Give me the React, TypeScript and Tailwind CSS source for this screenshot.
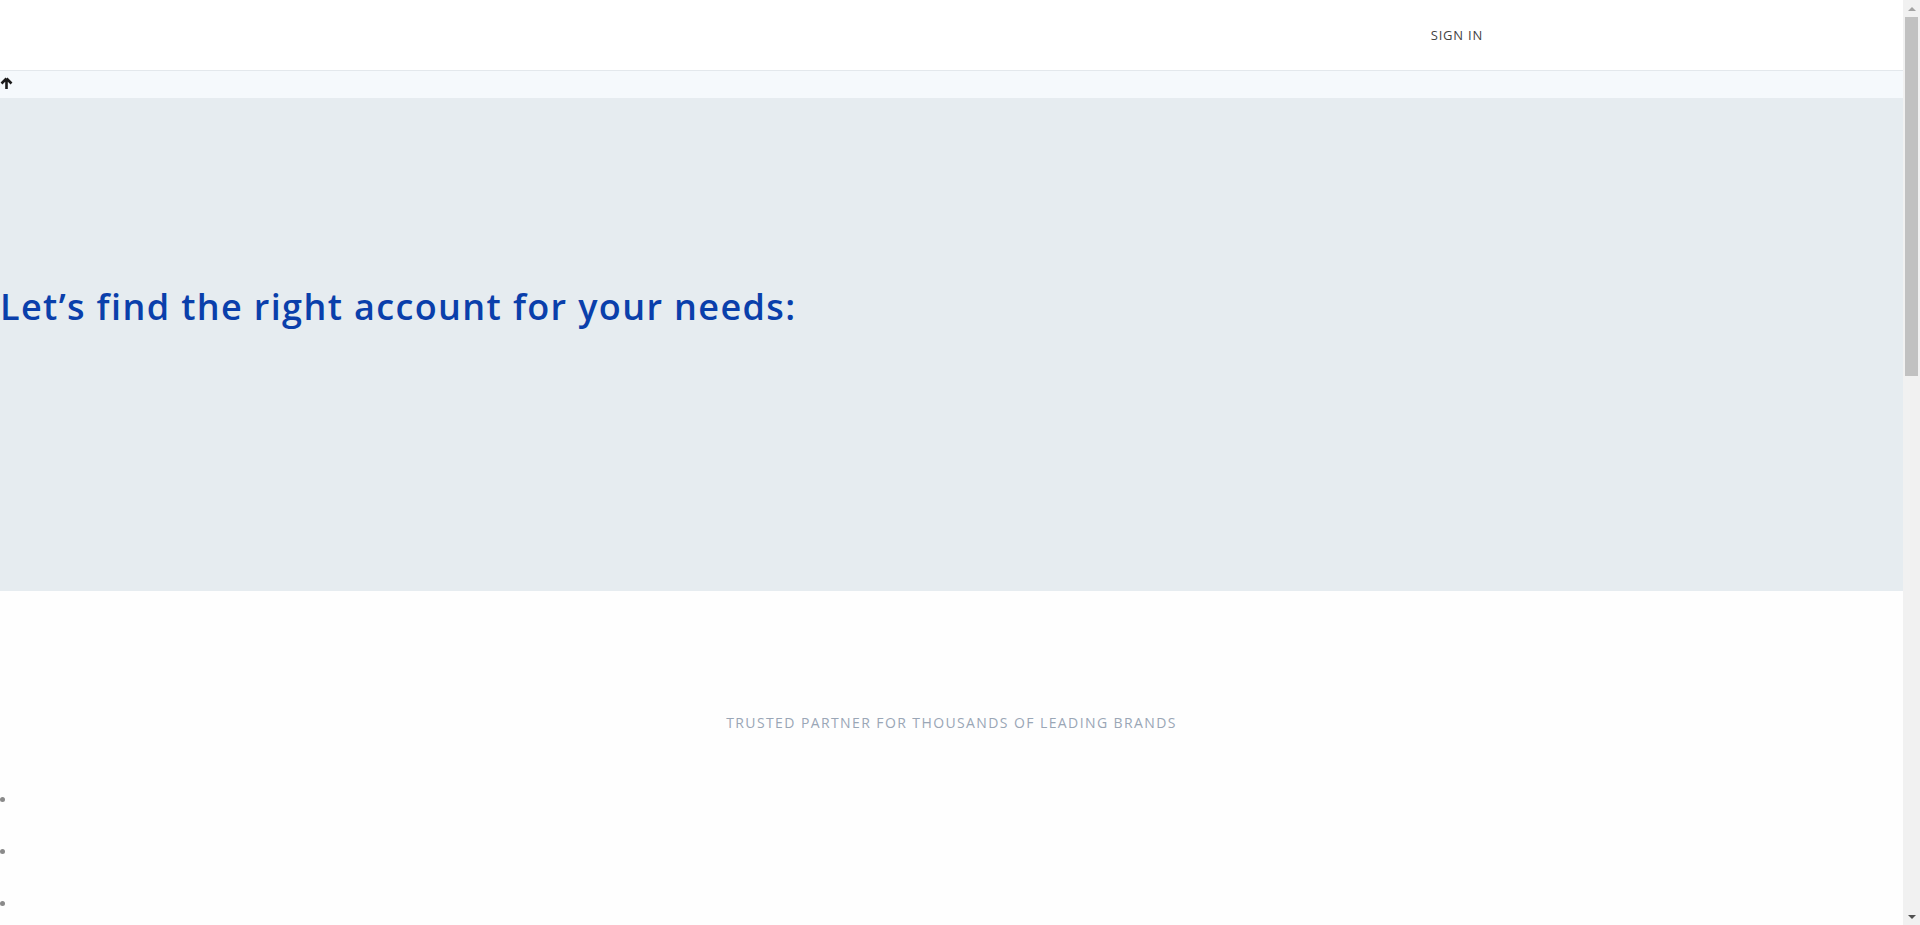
const logos = ["a", "b", "c"]

function UpArrow() {
  return (
    <svg width="13" height="13" viewBox="0 0 13 13" className="mt-[-3px]">
      <path d="M6.5 1.5 L1.5 6.5 M6.5 1.5 L11.5 6.5 M6.5 1.5 V12" stroke="#1a1a1a" strokeWidth="2.6" fill="none" />
    </svg>
  )
}

function Scrollbar() {
  return (
    <div className="w-[17px] shrink-0 h-full bg-[#f1f1f1] flex flex-col items-center">
      <div className="h-[17px] flex items-center justify-center">
        <span className="w-0 h-0 border-x-[4px] border-x-transparent border-b-[4px] border-b-[#a3a3a3]" />
      </div>
      <div className="w-[13px] h-[359px] bg-[#c1c1c1]" />
      <div className="flex-1" />
      <div className="h-[17px] flex items-center justify-center">
        <span className="w-0 h-0 border-x-[4px] border-x-transparent border-t-[4px] border-t-[#505050]" />
      </div>
    </div>
  )
}

export default function App() {
  return (
    <div className="h-screen flex overflow-hidden font-['Open_Sans',sans-serif]">
      <main className="flex-1 min-w-0 bg-[#fefefe]">
        {/* top bar */}
        <header className="h-[71px] bg-white border-b border-[#e3e8ec] shadow-[0_1px_2px_rgba(0,0,0,0.06)] flex items-center justify-end pr-[420px]">
          <a className="text-[13px] tracking-[0.06em] text-[#444] uppercase leading-none">
            Sign In
          </a>
        </header>

        {/* back-to-top strip */}
        <div className="h-[27px] bg-[#f5f9fc] flex items-center">
          <UpArrow />
        </div>

        {/* hero */}
        <section className="h-[493px] bg-[#e6ecf0] pt-[187px]">
          <h1 className="text-[36px] leading-[44px] font-semibold tracking-[0.038em] text-[#0a3fab]">
            Let’s find the right account for your needs:
          </h1>
        </section>

        {/* partners */}
        <section className="pt-[121px]">
          <p className="text-center text-[14px] tracking-[0.1em] text-[#9aa6b6] uppercase">
            Trusted partner for thousands of leading brands
          </p>
          <ul className="mt-[64px] flex flex-col gap-[48px]">
            {logos.map((l) => (
              <li key={l} className="h-[4px] flex items-center">
                <span className="w-[5px] h-[5px] rounded-full bg-[#8a8a8a]" />
              </li>
            ))}
          </ul>
        </section>
      </main>
      <Scrollbar />
    </div>
  )
}
